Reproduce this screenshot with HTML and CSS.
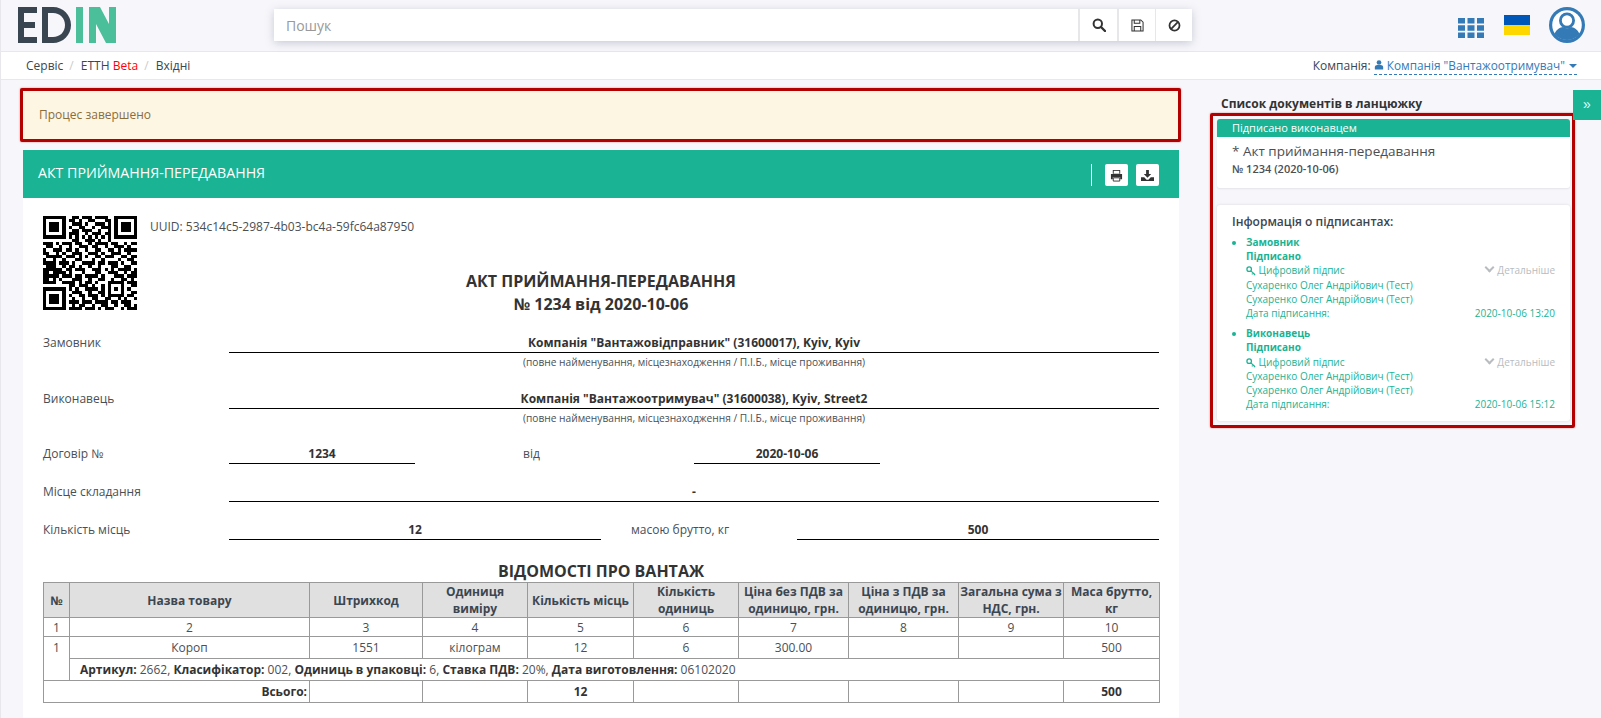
FILE: index.html
```html
<!DOCTYPE html>
<html lang="uk">
<head>
  <meta charset="UTF-8" />
  <title>ЕТТН</title>
  <link rel="stylesheet" href="styles.css">
</head>
<body>

  <header class="topbar">
    <svg class="logo" viewBox="0 0 98 36" aria-label="EDIN">
      <path fill="#3a4552" d="M0 0h19v6H6v9h11v6H6v9h13v6H0z"/>
      <path fill="#3a4552" fill-rule="evenodd" d="M24 0h11c10 0 18 8 18 18s-8 18-18 18H24zM30 6v24h5c7 0 12-5 12-12S42 6 35 6z"/>
      <path fill="#4bbf9a" d="M58 0h7v36h-7zM71 0h11l9 17V0h7v36H88L78 17v19h-7z"/>
    </svg>
    <div class="search">
      <input class="search-input" type="text" placeholder="Пошук">
      <button class="search-btn">
        <svg viewBox="0 0 14 14" width="14" height="14"><circle cx="5.8" cy="5.8" r="4.2" fill="none" stroke="#333" stroke-width="2"/><path d="M9 9l4 4" stroke="#333" stroke-width="2.4" stroke-linecap="round"/></svg>
      </button>
      <button class="search-btn">
        <svg viewBox="0 0 14 14" width="13" height="13"><path fill="none" stroke="#333" stroke-width="1.1" d="M1 1h9.5L13 3.5V13H1z"/><path fill="none" stroke="#333" stroke-width="1.1" d="M3.5 1v3.5h6V1M3.5 13V8h7v5"/></svg>
      </button>
      <button class="search-btn">
        <svg viewBox="0 0 14 14" width="13" height="13"><circle cx="7" cy="7" r="5.4" fill="none" stroke="#333" stroke-width="1.9"/><path d="M3.2 10.8l7.6-7.6" stroke="#333" stroke-width="1.9"/></svg>
      </button>
    </div>
    <div class="top-icons">
      <svg class="apps" viewBox="0 0 26 20">
        <path fill="#337ab7" d="M0 0h7v5.5H0zM9.500 0h7v5.500h-7zM19 0h7v5.500h-7zM0 7.300h7v5.500H0zM9.500 7.300h7v5.500h-7zM19 7.300h7v5.500h-7zM0 14.500h7V20H0zM9.500 14.500h7V20h-7zM19 14.500h7V20h-7z"/>
      </svg>
      <svg class="flag" viewBox="0 0 26 20"><path fill="#0057b8" d="M0 0h26v10H0z"/><path fill="#ffd700" d="M0 10h26v10H0z"/></svg>
      <svg class="avatar" viewBox="0 0 36 36">
        <circle cx="18" cy="18" r="18" fill="#337ab7"/>
        <circle cx="18" cy="18" r="14.800" fill="#fff"/>
        <circle cx="18" cy="13.500" r="6.600" fill="#fff" stroke="#337ab7" stroke-width="2.800"/>
        <path fill="#337ab7" d="M5.500 27c2-5 6-6.500 8.500-7 2.500 1.600 5.500 1.600 8 0 2.500.5 6.500 2 8.500 7-6.500 8-18.500 8-25 0z"/>
      </svg>
    </div>
  </header>

  <div class="crumbs">
    <div class="crumb-list">
      <a>Сервіс</a><span class="sep">/</span>
      <a>ЕТТН <span class="beta">Beta</span></a><span class="sep">/</span>
      <a>Вхідні</a>
    </div>
    <div class="company">
      Компанія:
      <a class="company-link">
        <svg viewBox="0 0 12 12" width="10" height="10"><circle cx="6" cy="3" r="2.800" fill="#337ab7"/><path fill="#337ab7" d="M1 11.500V8.500C1 7 2.500 6 4 6h4c1.500 0 3 1 3 2.500v3z"/></svg>
        Компанія "Вантажоотримувач"
        <span class="caret"></span>
      </a>
    </div>
  </div>

  <main class="layout">
    <section class="left-col">
      <div class="alert marked">Процес завершено</div>

      <div class="doc-bar">
        <h2>АКТ ПРИЙМАННЯ-ПЕРЕДАВАННЯ</h2>
        <div class="doc-tools">
          <button class="tool-btn">
            <svg viewBox="0 0 14 14" width="13" height="13"><path fill="#333" d="M3 1h8v4H3zM1 5.500h12v5.500h-2V9H3v2H1z"/><path fill="#fff" d="M4 2h6v3H4z"/><path fill="#fff" stroke="#333" d="M3.500 9.500h7v3.500h-7z"/></svg>
          </button>
          <button class="tool-btn">
            <svg viewBox="0 0 14 14" width="13" height="13"><path fill="#333" d="M5.500 1h3v4.500H11L7 9.500 3 5.500h2.500zM0 9h3.500L6 11.500h2L10.500 9H14v4H0z"/></svg>
          </button>
        </div>
      </div>

      <article class="doc">
        <div class="doc-head">
          <div class="qr-line">
            <svg class="qr" viewBox="0 0 29 29" shape-rendering="crispEdges">
              <path stroke="#000" stroke-width="1" d="M0 .5h7M9 .5h2M12 .5h3M16 .5h4M22 .5h7
                M0 1.500h1M6 1.500h1M8 1.500h2M11 1.500h1M14 1.500h2M19 1.500h2M22 1.500h1M28 1.500h1
                M0 2.500h1M2 2.500h3M6 2.500h1M9 2.500h3M13 2.500h1M16 2.500h3M20 2.500h1M22 2.500h1M24 2.500h3M28 2.500h1
                M0 3.500h1M2 3.500h3M6 3.500h1M8 3.500h1M11 3.500h2M15 3.500h1M18 3.500h3M22 3.500h1M24 3.500h3M28 3.500h1
                M0 4.500h1M2 4.500h3M6 4.500h1M9 4.500h2M12 4.500h3M17 4.500h1M20 4.500h1M22 4.500h1M24 4.500h3M28 4.500h1
                M0 5.500h1M6 5.500h1M8 5.500h3M13 5.500h1M15 5.500h3M19 5.500h2M22 5.500h1M28 5.500h1
                M0 6.500h7M8 6.500h1M10 6.500h1M12 6.500h1M14 6.500h1M16 6.500h1M18 6.500h1M20 6.500h1M22 6.500h7
                M9 7.500h2M13 7.500h3M17 7.500h1M20 7.500h1
                M0 8.500h3M4 8.500h1M6 8.500h3M10 8.500h2M14 8.500h1M16 8.500h4M21 8.500h2M25 8.500h1M27 8.500h2
                M1 9.500h2M5 9.500h1M8 9.500h1M11 9.500h3M15 9.500h2M19 9.500h1M22 9.500h3M26 9.500h1
                M0 10.500h1M3 10.500h3M7 10.500h2M10 10.500h1M13 10.500h1M16 10.500h2M20 10.500h2M23 10.500h1M25 10.500h4
                M0 11.500h2M4 11.500h1M6 11.500h1M9 11.500h3M14 11.500h3M18 11.500h1M21 11.500h3M26 11.500h1
                M1 12.500h5M7 12.500h3M11 12.500h1M13 12.500h1M16 12.500h2M19 12.500h3M24 12.500h2M27 12.500h2
                M0 13.500h1M3 13.500h1M6 13.500h1M10 13.500h2M15 13.500h1M18 13.500h1M23 13.500h1M26 13.500h2
                M0 14.500h4M5 14.500h3M9 14.500h1M12 14.500h4M17 14.500h2M20 14.500h3M24 14.500h1M27 14.500h2
                M1 15.500h3M6 15.500h1M8 15.500h2M11 15.500h1M14 15.500h1M17 15.500h1M21 15.500h2M25 15.500h2
                M0 16.500h6M7 16.500h2M10 16.500h3M15 16.500h3M19 16.500h1M21 16.500h1M23 16.500h4M28 16.500h1
                M0 17.500h2M3 17.500h4M8 17.500h1M12 17.500h1M16 17.500h2M20 17.500h3M25 17.500h1M27 17.500h2
                M0 18.500h5M6 18.500h3M10 18.500h2M13 18.500h4M18 18.500h1M22 18.500h3M26 18.500h3
                M0 19.500h2M3 19.500h1M5 19.500h1M9 19.500h3M14 19.500h1M17 19.500h2M21 19.500h1M24 19.500h2M27 19.500h1
                M0 20.500h4M6 20.500h4M11 20.500h1M13 20.500h2M16 20.500h1M20 20.500h5M26 20.500h3
                M8 21.500h2M11 21.500h3M15 21.500h1M18 21.500h1M20 21.500h1M24 21.500h1M27 21.500h2
                M0 22.500h7M8 22.500h1M10 22.500h1M13 22.500h4M18 22.500h1M20 22.500h1M22 22.500h1M24 22.500h1M26 22.500h1
                M0 23.500h1M6 23.500h1M9 23.500h3M14 23.500h1M17 23.500h2M20 23.500h1M24 23.500h1M27 23.500h2
                M0 24.500h1M2 24.500h3M6 24.500h1M8 24.500h1M11 24.500h2M14 24.500h3M18 24.500h1M20 24.500h5M26 24.500h2
                M0 25.500h1M2 25.500h3M6 25.500h1M9 25.500h1M12 25.500h1M15 25.500h2M19 25.500h2M23 25.500h1M25 25.500h1M28 25.500h1
                M0 26.500h1M2 26.500h3M6 26.500h1M8 26.500h3M12 26.500h3M16 26.500h4M21 26.500h2M24 26.500h3
                M0 27.500h1M6 27.500h1M9 27.500h1M11 27.500h2M15 27.500h1M18 27.500h2M22 27.500h1M25 27.500h2M28 27.500h1
                M0 28.500h7M8 28.500h4M13 28.500h3M17 28.500h1M19 28.500h3M24 28.500h1M26 28.500h3"/>
            </svg>
            <span class="uuid">UUID: 534c14c5-2987-4b03-bc4a-59fc64a87950</span>
          </div>
          <h1 class="doc-title">АКТ ПРИЙМАННЯ-ПЕРЕДАВАННЯ<br>№ 1234 від 2020-10-06</h1>
        </div>

        <div class="form-row row-wide first-row">
          <span class="field-label">Замовник</span>
          <span class="field-value">Компанія "Вантажовідправник" (31600017), Kyiv, Kyiv</span>
        </div>
        <p class="field-note">(повне найменування, місцезнаходження / П.І.Б., місце проживання)</p>

        <div class="form-row row-wide row-after-note">
          <span class="field-label">Виконавець</span>
          <span class="field-value">Компанія "Вантажоотримувач" (31600038), Kyiv, Street2</span>
        </div>
        <p class="field-note">(повне найменування, місцезнаходження / П.І.Б., місце проживання)</p>

        <div class="form-row row-contract row-next">
          <span class="field-label">Договір №</span>
          <span class="field-value">1234</span>
          <span></span>
          <span class="field-label">від</span>
          <span class="field-value">2020-10-06</span>
        </div>

        <div class="form-row row-wide row-next">
          <span class="field-label">Місце складання</span>
          <span class="field-value">-</span>
        </div>

        <div class="form-row row-places row-next">
          <span class="field-label">Кількість місць</span>
          <span class="field-value">12</span>
          <span></span>
          <span class="field-label">масою брутто, кг</span>
          <span class="field-value">500</span>
        </div>

        <h3 class="cargo-title">ВІДОМОСТІ ПРО ВАНТАЖ</h3>
        <table class="cargo">
          <colgroup>
            <col class="c-num"><col class="c-name"><col class="c-code"><col class="c-unit">
            <col class="c-places"><col class="c-qty"><col class="c-price"><col class="c-vat">
            <col class="c-sum"><col class="c-mass">
          </colgroup>
          <thead>
            <tr>
              <th>№</th><th>Назва товару</th><th>Штрихкод</th><th>Одиниця виміру</th>
              <th>Кількість місць</th><th>Кількість одиниць</th><th>Ціна без ПДВ за одиницю, грн.</th>
              <th>Ціна з ПДВ за одиницю, грн.</th><th>Загальна сума з НДС, грн.</th><th>Маса брутто, кг</th>
            </tr>
          </thead>
          <tbody>
            <tr class="num-row">
              <td>1</td><td>2</td><td>3</td><td>4</td><td>5</td><td>6</td><td>7</td><td>8</td><td>9</td><td>10</td>
            </tr>
            <tr>
              <td class="top-cell" rowspan="2">1</td><td>Короп</td><td>1551</td><td>кілограм</td><td>12</td><td>6</td><td>300.00</td><td></td><td></td><td>500</td>
            </tr>
            <tr>
              <td class="details" colspan="9"><b>Артикул:</b> 2662, <b>Класифікатор:</b> 002, <b>Одиниць в упаковці:</b> 6, <b>Ставка ПДВ:</b> 20%, <b>Дата виготовлення:</b> 06102020</td>
            </tr>
            <tr class="total-row">
              <td class="total-label" colspan="2">Всього:</td><td></td><td></td><td>12</td><td></td><td></td><td></td><td></td><td>500</td>
            </tr>
          </tbody>
        </table>
      </article>
    </section>

    <aside class="right-col">
      <h4 class="chain-title">Список документів в ланцюжку</h4>
      <div class="chain-box marked">
        <div class="card">
          <div class="card-badge">Підписано виконавцем</div>
          <div class="card-name">* Акт приймання-передавання</div>
          <div class="card-num">№ 1234 (2020-10-06)</div>
        </div>
        <div class="card signers">
          <div class="signers-title">Інформація о підписантах:</div>
          <ul class="signer-list">
            <li>
              <b>Замовник</b>
              <b>Підписано</b>
              <div class="signer-line">
                <span><svg class="key" viewBox="0 0 12 12" width="10" height="10"><circle cx="3.800" cy="3.800" r="2.700" fill="none" stroke="#1ab394" stroke-width="1.500"/><path d="M5.800 5.800L11 10.500M8.500 8.500l-1.500 1.500M10.500 10l-1 1" stroke="#1ab394" stroke-width="1.300"/></svg> Цифровий підпис</span>
                <span class="more"><span class="chevron"></span> Детальніше</span>
              </div>
              <div>Сухаренко Олег Андрійович (Тест)</div>
              <div>Сухаренко Олег Андрійович (Тест)</div>
              <div class="signer-line"><span>Дата підписання:</span><span>2020-10-06 13:20</span></div>
            </li>
            <li>
              <b>Виконавець</b>
              <b>Підписано</b>
              <div class="signer-line">
                <span><svg class="key" viewBox="0 0 12 12" width="10" height="10"><circle cx="3.800" cy="3.800" r="2.700" fill="none" stroke="#1ab394" stroke-width="1.500"/><path d="M5.800 5.800L11 10.500M8.500 8.500l-1.500 1.500M10.500 10l-1 1" stroke="#1ab394" stroke-width="1.300"/></svg> Цифровий підпис</span>
                <span class="more"><span class="chevron"></span> Детальніше</span>
              </div>
              <div>Сухаренко Олег Андрійович (Тест)</div>
              <div>Сухаренко Олег Андрійович (Тест)</div>
              <div class="signer-line"><span>Дата підписання:</span><span>2020-10-06 15:12</span></div>
            </li>
          </ul>
        </div>
      </div>
    </aside>

    <button class="side-toggle">»</button>
  </main>

</body>
</html>
```

FILE: styles.css
```css
* {
  box-sizing: border-box;
}

html {
  height: 718px;
  overflow: hidden;
}

body {
  margin: 0;
  height: 718px;
  font-family: 'Open Sans', sans-serif;
  font-size: 12px;
  background-color: #f7f7fb;
  color: #4a4f55;
  border-left: 1px solid #e7e7ec;
  overflow: hidden;
}

/* top bar */
.topbar {
  display: flex;
  height: 52px;
  border-bottom: 1px solid #e7e7ec;
  padding: 7px 0 0 17px;
}

.logo {
  width: 98px;
  height: 36px;
  flex: none;
}

.search {
  display: flex;
  width: 918px;
  height: 32px;
  margin: 2px 0 0 158px;
  box-shadow: 0 2px 10px rgba(90, 90, 130, 0.3);
  background-color: #e7e7ea;
}

.search-input {
  flex: 1;
  border: none;
  outline: none;
  padding: 0 12px;
  font-family: 'Open Sans', sans-serif;
  font-size: 14px;
  background-color: #fff;
}

.search-input::placeholder {
  color: #999;
}

.search-btn {
  width: 36px;
  margin-left: 2px;
  padding: 0;
  border: none;
  background-color: #fff;
  display: flex;
  align-items: center;
  justify-content: center;
}

.search-input + .search-btn {
  width: 37px;
}

.search-btn:last-child {
  margin-left: 1px;
}

.top-icons {
  display: flex;
  align-items: flex-start;
  margin-left: 266px;
}

.apps {
  width: 26px;
  height: 20px;
  margin-top: 11px;
}

.flag {
  width: 26px;
  height: 20px;
  margin: 8px 0 0 20px;
}

.avatar {
  width: 36px;
  height: 36px;
  margin-left: 19px;
}

/* breadcrumb row */
.crumbs {
  display: flex;
  justify-content: space-between;
  align-items: center;
  height: 28px;
  background-color: #fff;
  border-bottom: 1px solid #e7e7ec;
  padding: 0 24px 0 25px;
  color: #3c4650;
}

.crumb-list a {
  color: #3c4650;
}

.sep {
  color: #ccc;
  margin: 0 4px 0 6px;
}

.beta {
  color: #f00;
}

.company-link {
  display: inline-block;
  color: #337ab7;
  border-bottom: 1px dashed #337ab7;
  font-size: 11.800px;
  line-height: 17px;
}

.caret {
  display: inline-block;
  width: 0;
  height: 0;
  margin: 0 0 2px 1px;
  border-top: 4px solid #337ab7;
  border-left: 4px solid transparent;
  border-right: 4px solid transparent;
}

/* main area */
.layout {
  display: flex;
  padding: 8px 0 0 19px;
  position: relative;
}

.left-col {
  width: 1161px;
  flex: none;
}

.right-col {
  width: 365px;
  flex: none;
  margin-left: 29px;
  padding-top: 7px;
}

.marked {
  border: 3px solid #b30000;
  border-radius: 2px;
  box-shadow: 0 0 2px rgba(179, 0, 0, 0.5);
}

.alert {
  height: 54px;
  padding: 0 16px;
  background-color: #fdf6e3;
  color: #8a6d3b;
  font-size: 12px;
  line-height: 48px;
}

.doc-bar {
  display: flex;
  justify-content: space-between;
  align-items: center;
  height: 48px;
  margin: 8px 2px 0 3px;
  padding: 0 20px 0 15px;
  background-color: #1ab394;
  color: #fff;
}

.doc-bar h2 {
  margin: 0;
  font-size: 14.200px;
  font-weight: 500;
  position: relative;
  top: -2px;
}

.doc-tools {
  display: flex;
  gap: 8px;
  padding-left: 13px;
  border-left: 1px solid #fff;
  height: 22px;
  align-items: center;
  position: relative;
  top: 1px;
}

.tool-btn {
  width: 23px;
  height: 22px;
  padding: 0;
  border: none;
  border-radius: 2px;
  background-color: #fff;
  display: flex;
  align-items: center;
  justify-content: center;
}

.doc {
  margin: 0 2px 0 3px;
  padding: 18px 20px 21px;
  background-color: #fff;
}

.doc-head {
  display: grid;
}

.qr-line,
.doc-title {
  grid-area: 1 / 1;
}

.qr-line {
  display: flex;
  align-items: flex-start;
  gap: 13px;
}

.qr {
  width: 94px;
  height: 94px;
  flex: none;
}

.uuid {
  color: #4a4f55;
  line-height: 21px;
}

.doc-title {
  margin: 54px 0 0;
  text-align: center;
  font-size: 16px;
  font-weight: 700;
  line-height: 23px;
  color: #333;
}

.form-row {
  display: grid;
  height: 19px;
  line-height: 18px;
}

.form-row span {
  padding-top: 1px;
}

.row-wide {
  grid-template-columns: 186px 1fr;
}

.row-contract {
  grid-template-columns: 186px 186px 108px 171px 186px;
}

.row-places {
  grid-template-columns: 186px 372px 30px 166px 362px;
}

.first-row {
  margin-top: 17px;
}

.row-after-note {
  margin-top: 20px;
}

.row-next {
  margin-top: 19px;
}

.field-value {
  border-bottom: 1px solid #000;
  text-align: center;
  font-weight: 700;
  color: #333;
}

.field-note {
  margin: 3px 0 0 186px;
  font-size: 10.200px;
  line-height: 14px;
  text-align: center;
}

.cargo-title {
  margin: 21px 0 0;
  font-size: 16px;
  line-height: 22px;
  text-align: center;
  color: #333;
}

.cargo {
  width: 100%;
  table-layout: fixed;
  border-collapse: collapse;
  text-align: center;
  color: #4a4f55;
}

.c-num { width: 26px; }
.c-name { width: 240px; }
.c-code { width: 113px; }
.c-unit { width: 105px; }
.c-places { width: 106px; }
.c-qty { width: 105px; }
.c-price { width: 110px; }
.c-vat { width: 110px; }
.c-sum { width: 105px; }
.c-mass { width: 96px; }

.cargo th,
.cargo td {
  border: 1px solid #999;
  padding: 0 2px;
  height: 22px;
}

.cargo th {
  height: 35px;
  padding: 0;
  background-color: #e0e0e0;
  font-weight: 700;
  line-height: 17px;
  color: #3c4650;
}

.cargo .num-row td {
  height: 19px;
}

.cargo .top-cell {
  vertical-align: top;
  padding-top: 2px;
}

.cargo .details {
  text-align: left;
  padding-left: 10px;
}

.details b,
.total-row td {
  color: #333;
}

.total-row td {
  font-weight: 700;
}

.cargo .total-label {
  text-align: right;
}

/* right column */
.chain-title {
  margin: 0 0 1px 11px;
  font-size: 12px;
  font-weight: 700;
  line-height: 17px;
  color: #333;
}

.chain-box {
  height: 315px;
  padding: 3px 2px 0 4px;
}

.card {
  background-color: #fff;
  border-radius: 3px;
  box-shadow: 0 1px 2px rgba(0, 0, 0, 0.08);
  height: 69px;
}

.card-badge {
  height: 18px;
  padding-left: 15px;
  background-color: #1ab394;
  color: #fff;
  font-size: 11px;
  line-height: 18px;
  border-radius: 3px 3px 0 0;
}

.card-name {
  margin: 4px 0 0 15px;
  font-size: 13.500px;
  line-height: 20px;
}

.card-num {
  margin-left: 15px;
  font-size: 11px;
  font-weight: 600;
  line-height: 16px;
}

.signers {
  height: 216px;
  margin-top: 17px;
  padding: 8px 15px 0;
  box-shadow: 0 0 3px rgba(0, 0, 0, 0.12);
}

.signers-title {
  font-size: 12px;
  font-weight: 600;
  line-height: 18px;
  color: #3c4650;
}

.signer-list {
  margin: 4px 0 0;
  padding: 0 0 0 14px;
  color: #1ab394;
  font-size: 10px;
  line-height: 14.200px;
}

.signer-list li {
  margin-bottom: 6px;
}

.signer-list b {
  display: block;
}

.signer-line {
  display: flex;
  justify-content: space-between;
}

.key {
  vertical-align: -2px;
}

.more {
  color: #b8bcc0;
}

.chevron {
  display: inline-block;
  width: 7px;
  height: 7px;
  margin: 0 2px 3px 2px;
  border-right: 2px solid #b8bcc0;
  border-bottom: 2px solid #b8bcc0;
  transform: rotate(45deg);
}

.side-toggle {
  position: absolute;
  top: 10px;
  right: 0;
  width: 28px;
  height: 30px;
  padding: 0 0 2px;
  border: none;
  background-color: #1ab394;
  color: #dff;
  font-size: 14px;
}
```
